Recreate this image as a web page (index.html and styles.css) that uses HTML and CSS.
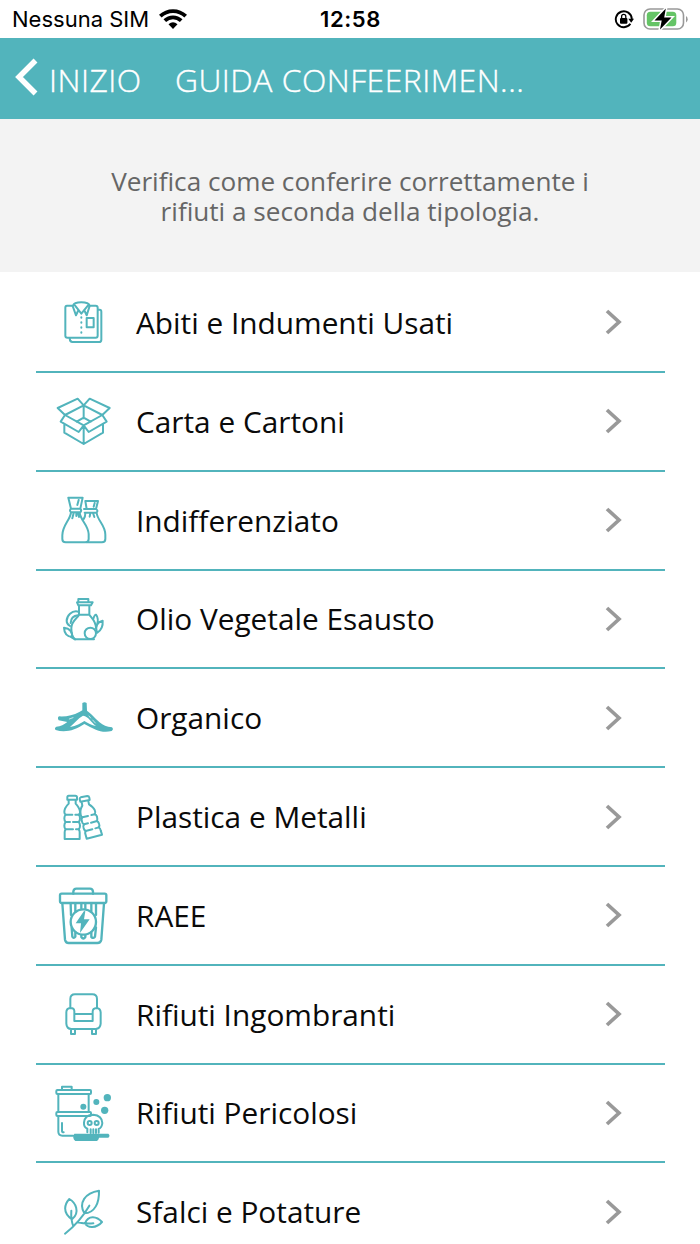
FILE: index.html
```
<!DOCTYPE html>
<html lang="it">
<head>
    <meta charset="UTF-8">
    <title>Guida Conferimento</title>
    <link rel="stylesheet" href="styles.css">
</head>
<body>
    <div class="status-bar">
        <div class="carrier">
            <span>Nessuna SIM</span>
            <svg class="wifi" viewBox="0 0 28 20" width="28" height="20">
                <g fill="none" stroke="#000" stroke-width="3.8">
                    <path d="M1.3 7.2C8.5 .3 19.5 .3 26.700 7.200"/>
                    <path d="M5.800 11.700C10.500 7.300 17.500 7.300 22.200 11.700"/>
                </g>
                <path d="M9.500 15.200Q14 11.500 18.500 15.200L14 20Z"/>
            </svg>
        </div>
        <div class="clock">12:58</div>
        <div class="indicators">
            <svg viewBox="0 0 20 20" width="20" height="20">
                <path d="M16.400 14.800A8 8 0 1 1 17.800 10" fill="none" stroke="#000" stroke-width="1.900"/>
                <path d="M14.300 9.700H20L17.200 13.700Z"/>
                <rect x="6" y="9" width="7.400" height="5.700" rx="1"/>
                <path d="M7.600 9.200V7.400a2.100 2.100 0 0 1 4.200 0V9.200" fill="none" stroke="#000" stroke-width="1.300"/>
            </svg>
            <svg viewBox="0 0 46 24" width="46" height="24">
                <rect x="1" y="2" width="39.500" height="20" rx="6" fill="none" stroke="#999" stroke-width="1.600"/>
                <rect x="3.800" y="4.800" width="29.500" height="14.400" rx="3.500" fill="#65c466"/>
                <path d="M43 9v6.500q1.700-.8 1.700-3.200T43 9" fill="#999"/>
                <path d="M22.800 1.500L11.500 13.600h7.200L17 22.500 28.500 10.500h-7.300Z" stroke="#fff" stroke-width="3"/>
                <path d="M22.800 1.500L11.500 13.600h7.200L17 22.500 28.500 10.500h-7.300Z"/>
            </svg>
        </div>
    </div>

    <div class="header">
        <svg class="back" viewBox="0 0 24 38" width="24" height="38">
            <path d="M21.500 2.500L5 19 21.500 35.500" fill="none" stroke="#fff" stroke-width="5.500"/>
        </svg>
        <span class="back-label">INIZIO</span>
        <span class="title">GUIDA CONFEERIMEN...</span>
    </div>

    <div class="intro">Verifica come conferire correttamente i<br>rifiuti a seconda della tipologia.</div>

    <div class="list">
        <div class="row">
            <svg class="icon" viewBox="0 -7 240 240">
                <path d="M83 64H66Q61 64 61 70V154Q61 160 67 160H152Q158 160 158 154V70Q158 64 152 64H136M159 76H164Q169 76 169 82V166Q169 173 162 173H82Q75 173 74 162"/>
                <path d="M84 64Q87 54 109 54T134 64M83 65L93 93 99 80M134 65L125 93 119 80M88 61L109 88 131 61M125 101H146V129H125Z"/>
                <path d="M109 99V148" stroke-dasharray="1 14"/>
            </svg>
            <span class="name">Abiti e Indumenti Usati</span>
            <svg class="chevron" viewBox="0 0 18 26"><path d="M2 2L14 13 2 24"/></svg>
        </div>
        <div class="row">
            <svg class="icon" viewBox="0 -10 240 240">
                <path d="M116 63L98 43 38 71 60 92ZM116 63L134 43 194 71 172 92ZM60 92L47 112 101 143 116 123ZM172 92L185 112 131 143 116 123ZM116 63V102M60 92L116 123 172 92M95 112L116 100 137 112M58 119V145L116 179 174 145V119M116 123V179"/>
            </svg>
            <span class="name">Carta e Cartoni</span>
            <svg class="chevron" viewBox="0 0 18 26"><path d="M2 2L14 13 2 24"/></svg>
        </div>
        <div class="row">
            <svg class="icon" viewBox="0 -5 240 240">
                <path d="M70 48H113L106 81H78ZM101 55L97 70M78 81Q72 87 78 92H106Q111 87 106 81M78 92C76 115 52 131 52 161V172Q52 182 62 182H121Q131 182 131 172V157C129 128 106 116 104 93M86 94L82 110M94 94V103M99 94L102 106"/>
                <path d="M121 58H159L153 82H125ZM149 64L146 75M117 82H153Q161 87 154 93H119M155 94C158 118 181 130 181 159V172Q181 182 171 182H125M121 94Q121 106 116 112M136 94L134 105M144 94L148 106"/>
            </svg>
            <span class="name">Indifferenziato</span>
            <svg class="chevron" viewBox="0 0 18 26"><path d="M2 2L14 13 2 24"/></svg>
        </div>
        <div class="row">
            <svg class="icon" viewBox="0 -3 240 240">
                <path d="M100 67V57H130V67M96 67H143L138 76H100ZM102 77V105C96 116 79 123 79 145Q79 172 91 178H147M133 77V104C140 115 153 123 153 145M103 104H132"/>
                <path d="M100 95C80 90 65 108 65 123Q65 132 75 138M99 106Q78 108 77 129"/>
                <circle cx="136" cy="160" r="17"/>
                <path d="M57 143Q82 145 82 171Q58 169 57 143M76 170L90 178M145 116Q149 103 153 104 163 116 155 138M155 154Q149 128 173 122 175 147 157 158"/>
            </svg>
            <span class="name">Olio Vegetale Esausto</span>
            <svg class="chevron" viewBox="0 0 18 26"><path d="M2 2L14 13 2 24"/></svg>
        </div>
        <div class="row">
            <svg class="icon" viewBox="0 -6 240 240">
                <path class="solid" fill-rule="evenodd" d="M112 69Q119 65 125 69L126 92 138 102C157 119 169 140 201 142Q207 148 200 153C170 161 148 148 118 132 91 151 60 159 32 150Q27 144 34 140C47 140 57 134 67 126L41 121Q36 113 42 109 75 111 103 96L112 91ZM114 107C99 115 89 129 75 141 94 138 107 130 118 123 128 128 140 137 153 138 136 125 132 110 114 107Z"/>
                <path class="vein" d="M73 117L84 113M132 108L137 114M143 120L151 129"/>
            </svg>
            <span class="name">Organico</span>
            <svg class="chevron" viewBox="0 0 18 26"><path d="M2 2L14 13 2 24"/></svg>
        </div>
        <div class="row">
            <svg class="icon" viewBox="0 -4 240 240">
                <path d="M71 52H91Q96 52 96 57V64H67V57Q67 52 71 52ZM71 65V76Q58 89 58 101 58 107 62 109 58 113 58 120 58 128 62 131 58 135 58 142 58 150 62 153 59 156 59 162V182H104V162Q104 156 101 153 105 150 105 142 105 135 101 131 105 128 105 120 105 113 101 109 106 107 105 100 104 89 92 76V65"/>
                <path d="M62 109H82M91 109H101M62 131H75M84 131H101M62 153H84M93 153H101"/>
                <path d="M107 57L127 53Q132 53 133 58L134 65 106 70 104 62Q104 58 107 57ZM110 71L112 82Q104 94 107 109 108 115 112 117 108 121 111 130 112 136 117 138 113 144 116 150 118 156 122 158 119 163 122 170L125 181 171 169 167 156Q166 149 161 147 165 142 162 136 160 130 156 128 158 123 156 115 154 109 149 108 153 102 149 95 146 87 132 78L130 68"/>
                <path d="M112 117L129 113M139 110L149 108M117 138L129 135M138 133L156 128M122 158L142 153M151 150L161 147"/>
            </svg>
            <span class="name">Plastica e Metalli</span>
            <svg class="chevron" viewBox="0 0 18 26"><path d="M2 2L14 13 2 24"/></svg>
        </div>
        <div class="row">
            <svg class="icon bold" viewBox="0 -2 240 240">
                <rect x="45" y="54" width="139" height="28" rx="5"/>
                <path d="M85 54V48Q86 39 94 39H135Q143 39 144 48V54M52 83L60 192Q62 202 71 202H157Q167 202 169 192L177 83"/>
                <path d="M77 84L78 118M91 84V108M109 84V98M121 84V98M139 84V107M153 84V118M80 157L82 183Q86 190 91 183V169M109 178V184Q115 193 121 184V178M139 170V184Q146 190 150 183L153 155"/>
                <circle cx="115" cy="139" r="38"/>
                <path class="solid" d="M117 106L92 143H108L105 172 134 131H117L121 107Z"/>
            </svg>
            <span class="name">RAEE</span>
            <svg class="chevron" viewBox="0 0 18 26"><path d="M2 2L14 13 2 24"/></svg>
        </div>
        <div class="row">
            <svg class="icon" viewBox="0 -2 240 240">
                <path d="M76 100V73Q76 59 90 59H142Q156 59 156 73V100M88 139V110Q88 100 76 100 64 101 64 113V147Q65 163 79 163H152Q166 162 167 147V113Q166 101 155 100 143 101 143 111V139ZM89 118H142M78 164V178H90V164M141 164V178H153V164"/>
            </svg>
            <span class="name">Rifiuti Ingombranti</span>
            <svg class="chevron" viewBox="0 0 18 26"><path d="M2 2L14 13 2 24"/></svg>
        </div>
        <div class="row">
            <svg class="icon" viewBox="0 -3 240 240">
                <rect x="34" y="48" width="104" height="12" rx="3"/>
                <rect x="34" y="114" width="104" height="12" rx="3"/>
                <path d="M51 47V38H80V47M40 61V113M131 61V113M40 127V174Q41 185 52 185H85M51 147V171Q51 175 56 175"/>
                <path d="M127 175V164Q116 160 117 146 119 122 145 122 171 124 172 147 171 161 161 165V176M137 166V177M145 166V177M153 166V177"/>
                <circle cx="134" cy="147" r="6"/>
                <circle cx="155" cy="147" r="6"/>
                <g class="solid">
                    <circle cx="115" cy="98" r="9"/>
                    <circle cx="154" cy="84" r="9"/>
                    <circle cx="187" cy="71" r="11"/>
                    <circle cx="179" cy="109" r="11"/>
                    <path d="M88 179H190Q197 185 190 191H162Q160 201 152 201H91Q80 191 88 179Z"/>
                </g>
            </svg>
            <span class="name">Rifiuti Pericolosi</span>
            <svg class="chevron" viewBox="0 0 18 26"><path d="M2 2L14 13 2 24"/></svg>
        </div>
        <div class="row">
            <svg class="icon" viewBox="0 24 240 240">
                <path d="M60 209C93 183 114 158 133 125M85 187Q77 167 79 140M98 175Q121 180 145 178M81 166C51 146 59 120 73 105 91 115 107 144 81 166ZM118 148C100 117 120 86 162 80 163 116 150 147 118 148ZM120 178C130 151 156 157 171 174 154 194 127 192 120 178Z"/>
            </svg>
            <span class="name">Sfalci e Potature</span>
            <svg class="chevron" viewBox="0 0 18 26"><path d="M2 2L14 13 2 24"/></svg>
        </div>
    </div>
</body>
</html>
```
FILE: styles.css
```
body {
    margin: 0;
    height: 1244px;
    overflow: hidden;
    background-color: #fff;
    color: #0a0a0a;
    font-family: 'Open Sans', sans-serif;
}
.status-bar {
    display: grid;
    grid-template-columns: 1fr auto 1fr;
    align-items: center;
    height: 38px;
    padding: 0 11px 0 12px;
    box-sizing: border-box;
    font-family: 'Inter', sans-serif;
    font-size: 22px;
    color: #000;
}
.carrier {
    display: flex;
    align-items: center;
    gap: 10px;
}
.clock {
    font-weight: 600;
    letter-spacing: 0.6px;
}
.indicators {
    display: flex;
    justify-content: flex-end;
    align-items: center;
    gap: 9px;
}
.header {
    display: flex;
    align-items: center;
    height: 81.4px;
    padding-left: 14px;
    box-sizing: border-box;
    background-color: #52b4bc;
    color: #fff;
    font-size: 31.8px;
    font-weight: 300;
    letter-spacing: 0.5px;
    white-space: nowrap;
    -webkit-text-stroke: 0.4px #fff;
}
.back {
    margin-bottom: 3px;
}
.back-label {
    width: 126px;
    margin-left: 11px;
}
.back-label,
.title {
    padding-top: 1px;
}
.intro {
    height: 153px;
    padding-top: 46.5px;
    box-sizing: border-box;
    background-color: #f3f3f3;
    color: #666;
    font-size: 26.15px;
    line-height: 30px;
    text-align: center;
}
.list {
    margin: 0 35px 0 36px;
}
.row {
    display: flex;
    align-items: center;
    height: 98.8px;
    padding: 0 42px 0 9px;
    box-sizing: border-box;
    border-bottom: 2px solid #52b4bc;
}
.row:first-child {
    height: 100.6px;
    padding-top: 1px;
}
.icon {
    width: 80px;
    height: 80px;
    fill: none;
    stroke: #52b4bc;
    stroke-width: 6;
    stroke-linejoin: round;
    stroke-linecap: round;
}
.icon.bold {
    stroke-width: 7;
}
.icon .solid {
    fill: #52b4bc;
    stroke: none;
}
.icon .vein {
    stroke: #fff;
    stroke-width: 2;
}
.name {
    flex: 1;
    margin-left: 11px;
    font-size: 29.8px;
    white-space: nowrap;
}
.chevron {
    width: 18px;
    height: 26px;
    fill: none;
    stroke: #999;
    stroke-width: 3.7;
}
```
